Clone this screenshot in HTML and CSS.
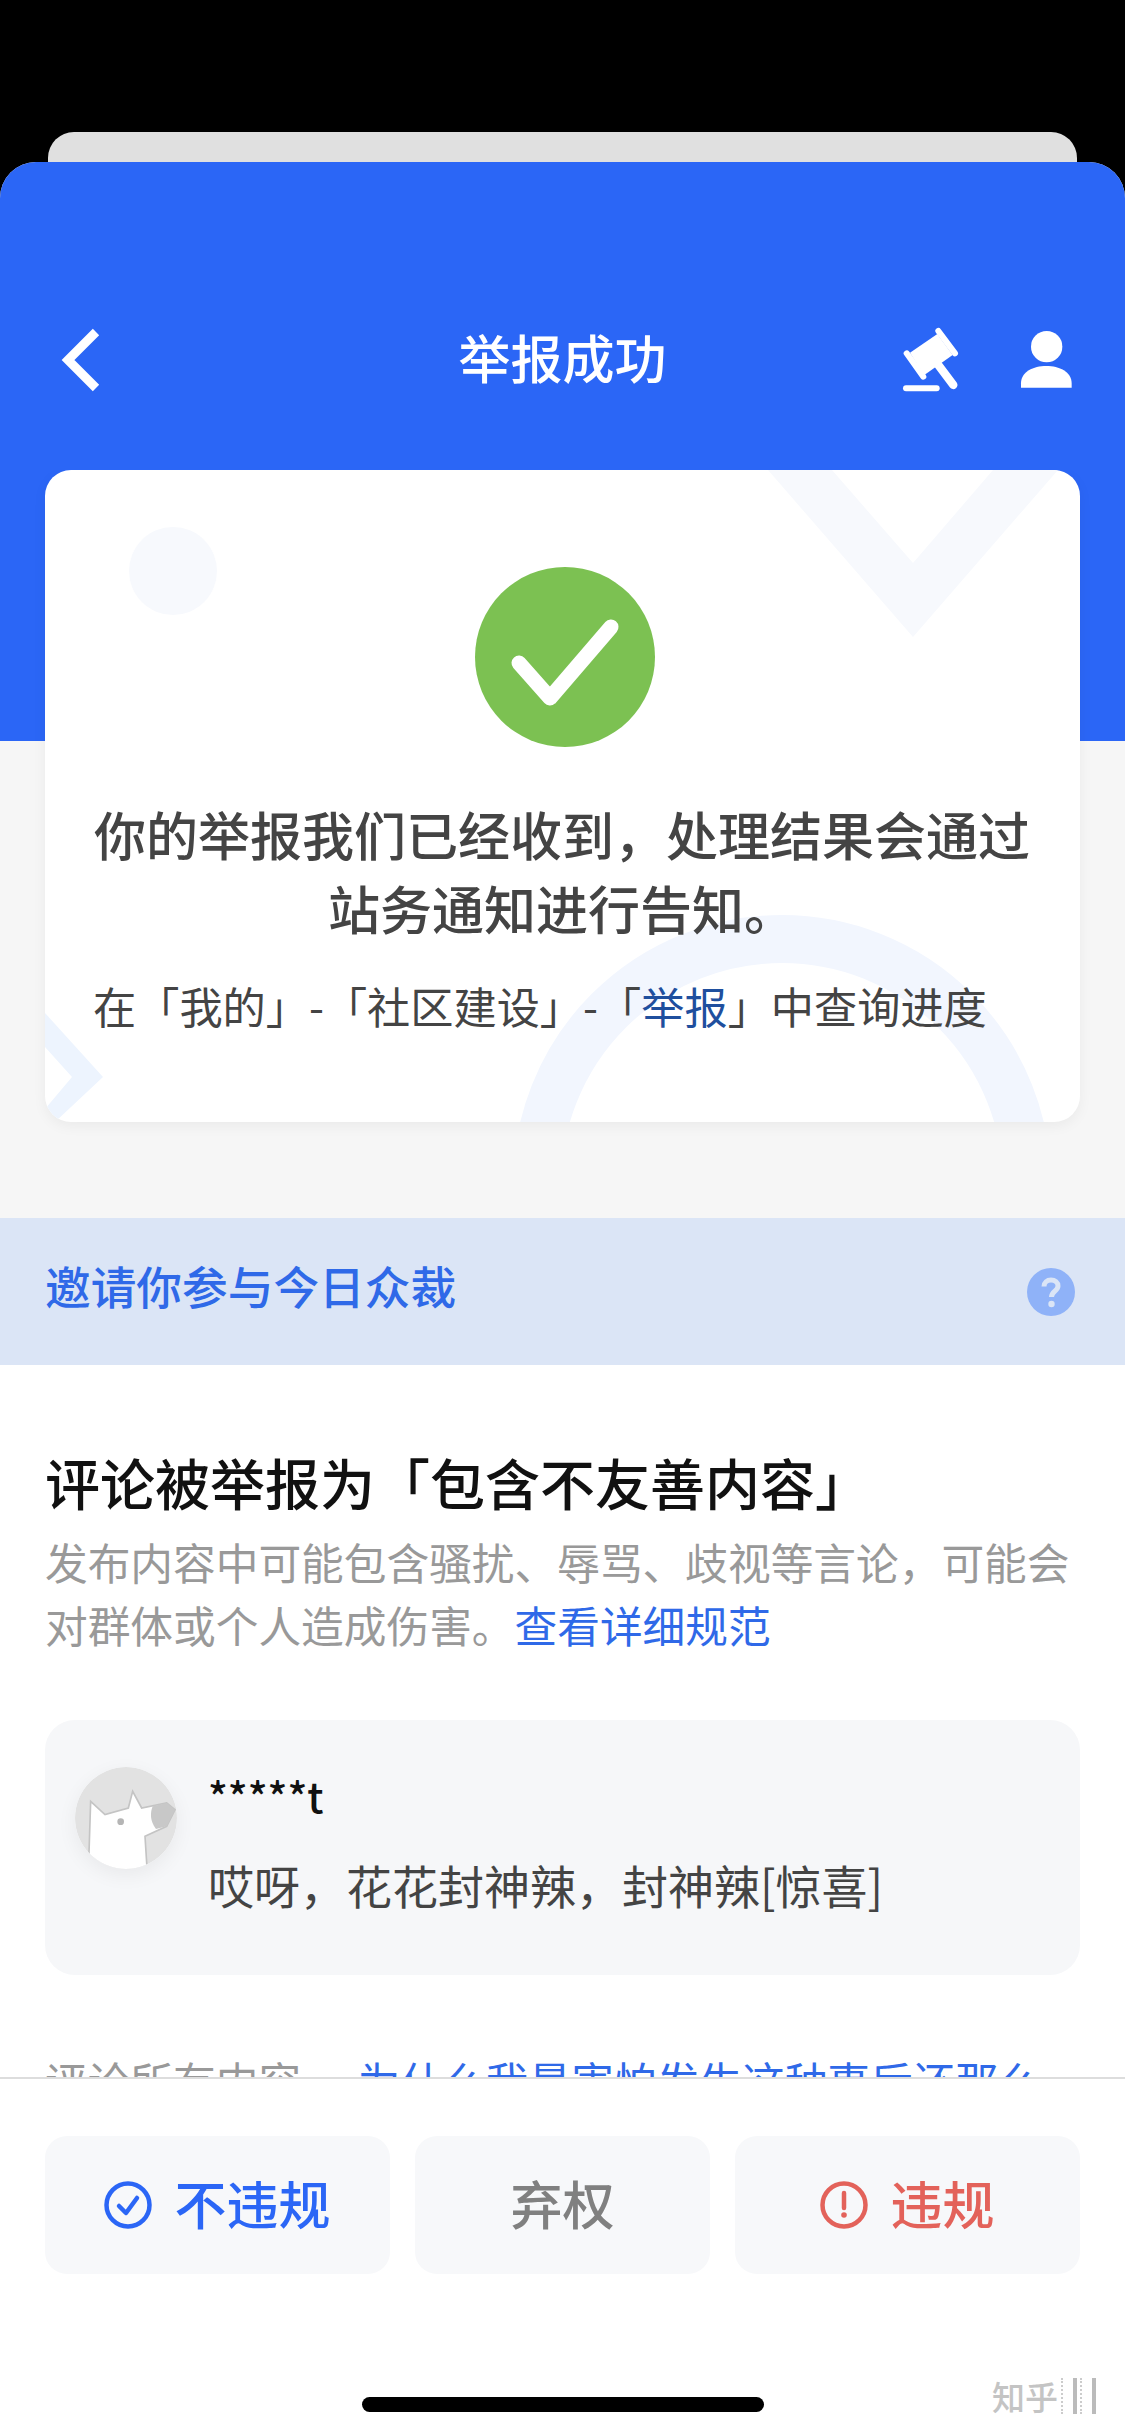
FILE: index.html
```html
<!DOCTYPE html>
<html lang="zh-CN">
<head>
  <meta charset="UTF-8" />
  <meta name="viewport" content="width=device-width, initial-scale=1.0"/>
  <title>举报成功</title>
  <link rel="stylesheet" href="styles.css">
</head>
<body>
  <div class="peek"></div>

  <div class="sheet">
    <header class="head">
      <nav class="nav">
        <svg class="back" width="50" height="66" viewBox="0 0 50 66">
          <polyline points="45,5 17,33 45,61" fill="none" stroke="#fff" stroke-width="9"/>
        </svg>
        <h1 class="nav-title">举报成功</h1>
        <div class="nav-icons">
          <svg width="60" height="70" viewBox="120 75 180 210">
            <g stroke="#fff" stroke-linecap="round" fill="none">
              <line x1="140" y1="160" x2="190" y2="230" stroke-width="18"/>
              <line x1="235" y1="93" x2="285" y2="160" stroke-width="18"/>
              <line x1="235" y1="195" x2="280" y2="255" stroke-width="25"/>
              <line x1="138" y1="265" x2="230" y2="265" stroke-width="18"/>
            </g>
            <polygon points="150,158 232,102 278,165 192,226" fill="#fff"/>
          </svg>
          <svg width="54" height="60" viewBox="480 90 162 180">
            <circle cx="560" cy="140" r="47" fill="#fff"/>
            <path d="M483 263 V250 C483 215 520 198 559 198 C598 198 635 215 635 250 V263 Z" fill="#fff"/>
          </svg>
        </div>
      </nav>
    </header>

    <div class="content">
      <section class="result-card">
        <svg class="card-deco" width="1035" height="652" viewBox="0 0 1035 652">
          <circle cx="128" cy="101" r="44" fill="#f7f9fd"/>
          <polygon points="723,0 868,167 1013,0 948,0 868,93 787,0" fill="#f7f9fd"/>
          <circle cx="737" cy="714" r="245" fill="none" stroke="#f2f6fe" stroke-width="48"/>
          <polygon points="0,543 58,607 10,652 0,652 0,639 27,607 0,577" fill="#edf4fe"/>
        </svg>
        <svg class="ok-icon" width="180" height="180" viewBox="0 0 180 180">
          <circle cx="90" cy="90" r="90" fill="#7cc152"/>
          <polyline points="44,96 75,131 136,60" fill="none" stroke="#fff" stroke-width="15" stroke-linecap="round" stroke-linejoin="round"/>
        </svg>
        <p class="result-text">你的举报我们已经收到&#xFF0C;处理结果会通过站务通知进行告知。</p>
        <p class="result-sub">在「我的」-「社区建设」-「<a class="sub-link">举报</a>」中查询进度</p>
      </section>

      <div class="invite">
        <span class="invite-text">邀请你参与今日众裁</span>
        <svg width="48" height="48" viewBox="0 0 48 48">
          <circle cx="24" cy="24" r="24" fill="#8fb2f8"/>
          <path d="M17 18.5 C17 14.5 20 12 24 12 C28 12 31 14.5 31 18 C31 23 24.5 23.5 24.5 29" fill="none" stroke="#dbe5f6" stroke-width="5"/>
          <circle cx="24.5" cy="36" r="3.2" fill="#dbe5f6"/>
        </svg>
      </div>

      <section class="review">
        <h2 class="review-title">评论被举报为「包含不友善内容」</h2>
        <p class="review-desc">发布内容中可能包含骚扰、辱骂、歧视等言论&#xFF0C;可能会对群体或个人造成伤害。<a class="link">查看详细规范</a></p>

        <div class="comment">
          <svg class="avatar" width="102" height="102" viewBox="75 82 306 306">
            <defs><clipPath id="avatarClip"><circle cx="228" cy="235" r="153"/></clipPath></defs>
            <circle cx="228" cy="235" r="153" fill="#e2e2e2"/>
            <g clip-path="url(#avatarClip)">
              <path d="M122 185 L165 225 L235 205 L248 155 L275 205 L350 190 L375 210 L350 260 L285 290 L292 400 L115 400 Z" fill="#fff" stroke="#c4c4c4" stroke-width="5"/>
              <path d="M308 200 L350 190 L375 210 L350 260 L318 268 C300 245 300 220 308 200 Z" fill="#c8c8c8"/>
              <circle cx="212" cy="246" r="10" fill="#b5b5b5"/>
            </g>
          </svg>
          <div class="comment-body">
            <div class="comment-name">*****t</div>
            <div class="comment-text">哎呀&#xFF0C;花花封神辣&#xFF0C;封神辣[惊喜]</div>
          </div>
        </div>

        <p class="review-desc more">评论所有内容。<a class="link">为什么我最害怕发生这种事后还那么</a></p>
      </section>
    </div>

    <footer class="foot">
      <div class="actions">
        <button class="act act-ok">
          <svg width="48" height="48" viewBox="0 0 48 48">
            <circle cx="24" cy="24" r="21.5" fill="none" stroke="currentColor" stroke-width="4.5"/>
            <polyline points="15,25 22,32 33,17" fill="none" stroke="currentColor" stroke-width="4.5" stroke-linecap="round" stroke-linejoin="round"/>
          </svg>
          <span class="act-label">不违规</span>
        </button>
        <button class="act act-skip"><span class="act-label">弃权</span></button>
        <button class="act act-bad">
          <svg width="48" height="48" viewBox="0 0 48 48">
            <circle cx="24" cy="24" r="21.5" fill="none" stroke="currentColor" stroke-width="4.5"/>
            <line x1="24" y1="12" x2="24" y2="27" stroke="currentColor" stroke-width="4.5" stroke-linecap="round"/>
            <circle cx="24" cy="34" r="2.8" fill="currentColor"/>
          </svg>
          <span class="act-label">违规</span>
        </button>
      </div>
      <div class="home-bar"></div>
      <div class="watermark">
        <span>知乎</span>
        <i class="mark-bar"></i>
        <i class="mark-bar"></i>
      </div>
    </footer>
  </div>
</body>
</html>
```

FILE: styles.css
```css
:root {
  --blue: #2b66f6;
  --card-bg: #f6f7f9;
  --text: #444;
  --muted: #999;
}

html, body {
  margin: 0;
  height: 2436px;
  overflow: hidden;
}

body {
  padding-top: 132px;
  box-sizing: border-box;
  background: #000;
  font-family: "Noto Sans CJK SC", "Noto Sans", sans-serif;
  color: var(--text);
}

p, h1, h2 {
  margin: 0;
}

.peek {
  height: 30px;
  margin: 0 48px 0 48px;
  background: #e0e0e0;
  border-radius: 26px 26px 0 0;
}

.sheet {
  position: relative;
  display: flex;
  flex-direction: column;
  height: 2274px;
  background: #f6f6f6;
  border-radius: 36px 36px 0 0;
  overflow: hidden;
}

/* blue top part */
.head {
  flex: none;
  height: 579px;
  box-sizing: border-box;
  padding-top: 163px;
  background: var(--blue);
}

.nav {
  display: grid;
  grid-template-columns: 1fr auto 1fr;
  align-items: center;
  padding: 0 51px;
  height: 70px;
}

.nav-title {
  padding-bottom: 6px;
  font-size: 52px;
  font-weight: 500;
  color: #fff;
  line-height: 64px;
}

.nav-icons {
  display: flex;
  justify-content: flex-end;
  align-items: center;
  gap: 60px;
}

.content {
  flex: 1;
  min-height: 0;
  overflow: hidden;
  margin-top: -271px;
}

.result-card {
  position: relative;
  display: flex;
  flex-direction: column;
  align-items: center;
  height: 652px;
  box-sizing: border-box;
  margin: 0 45px 96px;
  padding: 97px 38px 0 43px;
  background: #fff;
  border-radius: 26px;
  box-shadow: 0 4px 14px rgba(0, 0, 0, 0.05);
  overflow: hidden;
}

.card-deco {
  position: absolute;
  left: 0;
  top: 0;
}

.ok-icon,
.result-text,
.result-sub {
  position: relative;
}

.result-text {
  margin: 50px 6px 0 0;
  font-size: 52px;
  font-weight: 500;
  line-height: 74px;
  text-align: center;
}

.result-sub {
  align-self: flex-start;
  margin-top: 30px;
  margin-left: 5px;
  font-size: 43.2px;
  line-height: 60px;
}

.sub-link {
  color: #1f4f9e;
}

.invite {
  display: flex;
  justify-content: space-between;
  align-items: center;
  height: 147px;
  box-sizing: border-box;
  padding: 0 50px 0 45px;
  background: #dbe5f6;
}

.invite-text {
  margin-bottom: 14px;
  font-size: 45.7px;
  font-weight: 500;
  color: #2f69e8;
}

.review {
  height: 1000px;
  padding: 83px 45px 0;
  background: #fff;
}

.review-title {
  font-size: 55px;
  font-weight: 500;
  line-height: 66px;
  color: #111;
}

.review-desc {
  margin-top: 16px;
  font-size: 42.7px;
  line-height: 63px;
  color: var(--muted);
}

.link {
  color: #2f69e8;
}

.comment {
  display: flex;
  gap: 31px;
  height: 255px;
  box-sizing: border-box;
  margin-top: 64px;
  padding: 47px 30px 0;
  background: var(--card-bg);
  border-radius: 30px;
}

.avatar {
  flex: none;
  border-radius: 50%;
  box-shadow: 0 6px 20px rgba(0, 0, 0, 0.06);
}

.comment-name {
  font-size: 41px;
  font-weight: 500;
  line-height: 56px;
  color: #111;
}

.comment-text {
  margin-top: 31px;
  font-size: 46px;
  line-height: 60px;
}

.more {
  margin-top: 74px;
}

.more .link {
  margin-left: 14px;
}

/* bottom bar */
.foot {
  position: relative;
  flex: none;
  height: 359px;
  box-sizing: border-box;
  padding-top: 57px;
  background: #fff;
  border-top: 2px solid #ddd;
}

.actions {
  display: flex;
  gap: 25px;
  padding: 0 45px;
}

.act {
  display: flex;
  justify-content: center;
  align-items: center;
  gap: 22px;
  height: 138px;
  padding: 0;
  border: 0;
  border-radius: 22px;
  background: #f7f8fa;
  font-family: inherit;
  font-size: 52px;
  font-weight: 500;
}

.act-label {
  padding-bottom: 5px;
}

.act-ok {
  flex: 345;
  color: var(--blue);
}

.act-skip {
  flex: 295;
  color: #808080;
}

.act-bad {
  flex: 345;
  color: #e3625a;
}

.home-bar {
  width: 402px;
  height: 15px;
  margin: 123px auto 0;
  background: #000;
  border-radius: 8px;
}

.watermark {
  position: absolute;
  right: 29px;
  bottom: 22px;
  display: flex;
  align-items: center;
  gap: 3px;
  color: #c4c4c4;
  font-size: 33px;
  font-weight: 500;
  line-height: 36px;
}

.mark-bar {
  display: block;
  width: 10px;
  height: 36px;
  border-left: 2px dotted #ccc;
  border-right: 4px solid #bbb;
}
```
